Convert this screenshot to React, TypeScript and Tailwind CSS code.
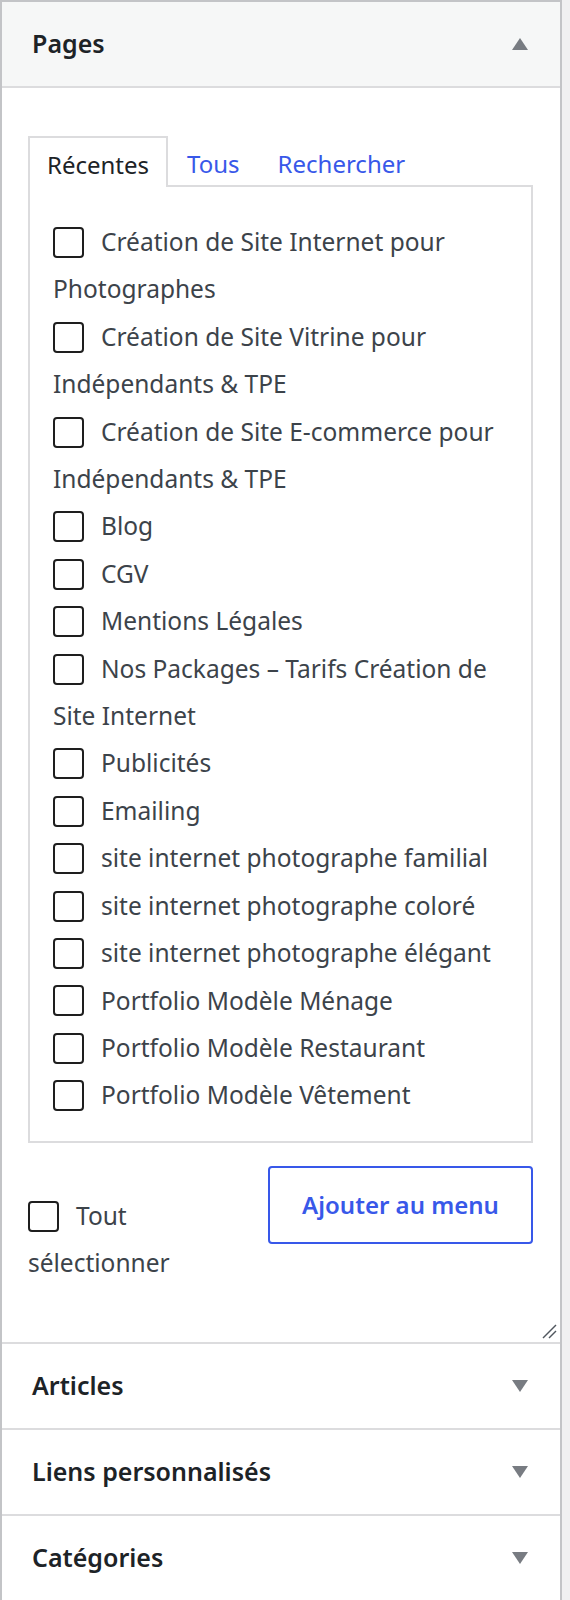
import React from "react";

const items = [
  "Création de Site Internet pour Photographes",
  "Création de Site Vitrine pour Indépendants & TPE",
  "Création de Site E-commerce pour Indépendants & TPE",
  "Blog",
  "CGV",
  "Mentions Légales",
  "Nos Packages – Tarifs Création de Site Internet",
  "Publicités",
  "Emailing",
  "site internet photographe familial",
  "site internet photographe coloré",
  "site internet photographe élégant",
  "Portfolio Modèle Ménage",
  "Portfolio Modèle Restaurant",
  "Portfolio Modèle Vêtement",
];

const font = { fontFamily: '"Noto Sans", "Open Sans", sans-serif' };

function Box() {
  return (
    <span className="inline-block w-[31px] h-[31px] border-2 border-[#1e1e1e] rounded-[4px] bg-white align-middle mr-[17px] relative -top-[2px]" />
  );
}

function Tri({ up }: { up?: boolean }) {
  return (
    <svg width="16" height="12" viewBox="0 0 16 12" className="block">
      {up ? (
        <polygon points="8,0 16,12 0,12" fill="#787c82" />
      ) : (
        <polygon points="0,0 16,0 8,12" fill="#787c82" />
      )}
    </svg>
  );
}

function Section({ title }: { title: string }) {
  return (
    <div className="h-[86px] border-t-2 border-[#dcdcde] flex items-center justify-between pl-[30px] pr-[32px] bg-white">
      <span className="text-[25px] font-semibold text-[#1d2327]">{title}</span>
      <Tri />
    </div>
  );
}

export default function App() {
  return (
    <div className="w-[570px] min-h-[1600px] bg-[#f0f0f1]" style={font}>
      <div className="w-[562px] border-2 border-b-0 border-[#c3c4c7] bg-white">
        <div className="h-[86px] bg-[#f6f7f7] border-b-2 border-[#dcdcde] flex items-center justify-between pl-[30px] pr-[32px]">
          <span className="text-[25px] font-semibold text-[#1d2327]">Pages</span>
          <Tri up />
        </div>
        <div className="relative pt-[48px] pl-[26px] pr-[27px] pb-[55px]">
          <div className="flex text-[24px] relative z-10">
            <div className="h-[51px] px-[17px] pt-[4px] border-2 border-b-0 border-[#dcdcde] bg-white flex items-center text-[#1d2327] -mb-[2px]">
              Récentes
            </div>
            <div className="h-[49px] px-[19px] pt-[6px] flex items-center text-[#3858e9]">Tous</div>
            <div className="h-[49px] px-[19px] pt-[6px] flex items-center text-[#3858e9]">Rechercher</div>
          </div>
          <div className="border-2 border-[#dcdcde] pt-[31px] pb-[22px] pl-[23px] pr-[14px]">
            <ul className="text-[24.5px] leading-[47.4px] text-[#3c434a]">
              {items.map((t) => (
                <li key={t}>
                  <Box />
                  {t}
                </li>
              ))}
            </ul>
          </div>
          <div className="mt-[23px] flex justify-between items-start">
            <div className="mt-[26px] w-[200px] text-[24.5px] leading-[47.4px] text-[#3c434a]">
              <Box />
              Tout sélectionner
            </div>
            <div className="w-[265px] h-[78px] border-2 border-[#3858e9] rounded-[4px] flex items-center justify-center text-[24px] font-semibold text-[#3858e9]">
              Ajouter au menu
            </div>
          </div>
          <svg width="16" height="16" viewBox="0 0 16 16" className="absolute right-[3px] bottom-[3px]">
            <line x1="2" y1="15" x2="15" y2="2" stroke="#50575e" strokeWidth="1.5" />
            <line x1="8" y1="15" x2="15" y2="8" stroke="#50575e" strokeWidth="1.5" />
          </svg>
        </div>
        <Section title="Articles" />
        <Section title="Liens personnalisés" />
        <Section title="Catégories" />
      </div>
    </div>
  );
}
